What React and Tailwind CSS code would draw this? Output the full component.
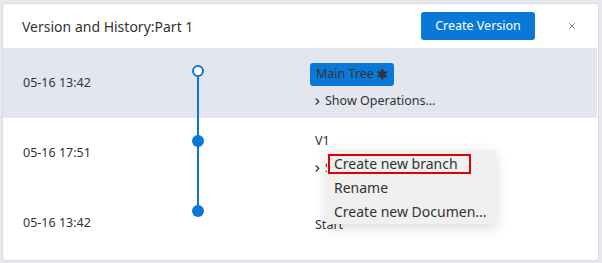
import { ChevronRight, X } from "lucide-react";

const rows = [
  { date: "05-16 13:42", kind: "current", active: true },
  { date: "05-16 17:51", kind: "v1" },
  { date: "05-16 13:42", kind: "start" },
];

function Dot({ hollow, first, last }) {
  return (
    <div className="relative w-[24px] self-stretch">
      {!first && (
        <div className="absolute left-[11px] top-0 h-[23px] w-[2px] bg-[#0a78d7]" />
      )}
      {!last && (
        <div className="absolute left-[11px] top-[23px] bottom-0 w-[2px] bg-[#0a78d7]" />
      )}
      <div
        className={
          hollow
            ? "absolute left-[6px] top-[17px] h-[12px] w-[12px] rounded-full border-2 border-[#0a78d7] bg-white"
            : "absolute left-[6px] top-[17px] h-[12px] w-[12px] rounded-full bg-[#0a78d7]"
        }
      />
    </div>
  );
}

function ShowOps() {
  return (
    <div className="mt-[6px] flex items-center pl-[2px] text-[12.5px] text-[#333]">
      <ChevronRight size={11} strokeWidth={2.5} className="mr-[2px]" />
      <span>Show Operations...</span>
    </div>
  );
}

export default function App() {
  return (
    <div
      className="h-[263px] w-[602px] bg-[#e7e9ee] pl-[2px] pr-[3px] pt-[3px] pb-[2px]"
      style={{ fontFamily: '"Noto Sans", "Liberation Sans", sans-serif' }}
    >
      <div className="relative flex h-full flex-col rounded-[4px] border border-[#d9dce3] bg-white">
        {/* header */}
        <div className="flex h-[44px] items-center pl-[19px] pr-[21px]">
          <h1 className="flex-1 text-[14px] text-[#333]">Version and History:Part 1</h1>
          <button className="h-[28px] w-[114px] rounded-[3px] bg-[#0a78d7] text-[12.5px] text-white">
            Create Version
          </button>
          <button className="ml-[32px] text-[#666]">
            <X size={10} strokeWidth={2} />
          </button>
        </div>

        {/* timeline */}
        <div className="mr-[1px] flex flex-col">
          {rows.map((r, i) => (
            <div
              key={i}
              className={`flex h-[70px] ${r.active ? "bg-[#e3e6ee]" : ""}`}
            >
              <div className="flex w-[183px] items-center pl-[20px] text-[12.5px] text-[#333]">
                {r.date}
              </div>
              <Dot hollow={i === 0} first={i === 0} last={i === rows.length - 1} />
              <div
                className={`ml-[100px] flex-1 ${r.kind === "start" ? "flex items-center" : "pt-[12px]"}`}
              >
                {r.kind === "current" && (
                  <>
                    <span className="inline-flex h-[23px] items-center rounded-[3px] bg-[#0a78d7] px-[6px] text-[12.5px] text-[#333]">
                      Main Tree <span className="ml-[3px] text-[13px] font-bold">✱</span>
                    </span>
                    <ShowOps />
                  </>
                )}
                {r.kind === "v1" && (
                  <>
                    <div className="flex h-[23px] items-center pl-[5px] text-[12.5px] text-[#333]">V1</div>
                    <ShowOps />
                  </>
                )}
                {r.kind === "start" && (
                  <div className="pl-[5px] pt-[4px] text-[12.5px] text-[#333]">Start</div>
                )}
              </div>
            </div>
          ))}
        </div>

        {/* context menu */}
        <div className="absolute left-[324px] top-[146px] w-[169px] bg-[#f0f0f0] px-[7px] pt-[1px] pb-[1px] text-[14px] text-[#333] shadow-[0_4px_12px_rgba(0,0,0,0.15)]">
          <div className="relative flex h-[24px] items-center">
            <span>Create new branch</span>
            <div className="absolute -left-[6px] top-[3px] h-[20px] w-[143px] border-2 border-[#e00000]" />
          </div>
          <div className="flex h-[24px] items-center">Rename</div>
          <div className="flex h-[24px] items-center whitespace-nowrap">Create new Documen...</div>
        </div>
      </div>
    </div>
  );
}
